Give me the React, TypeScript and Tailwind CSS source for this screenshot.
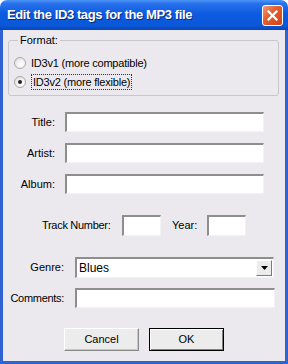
import React from "react";

const font = { fontFamily: '"Liberation Sans", Arial, sans-serif' };

function Field({ className }: { className: string }) {
  return (
    <div
      className={`h-[20px] shrink-0 bg-white border-t-2 border-l-2 border-t-[#8e8e8e] border-l-[#8e8e8e] border-b border-r border-b-[#f2f2f2] border-r-[#f2f2f2] ${className}`}
    />
  );
}

function Radio({ checked }: { checked?: boolean }) {
  return (
    <span className="w-[12px] h-[12px] rounded-full border border-[#a9a9a9] bg-[radial-gradient(circle_at_65%_65%,#ffffff_0%,#f2f2f2_45%,#d4d4d4_100%)] flex items-center justify-center shrink-0">
      {checked && <span className="w-[4px] h-[4px] rounded-full bg-[#222]" />}
    </span>
  );
}

function Button({ label, primary }: { label: string; primary?: boolean }) {
  return (
    <div
      className={`w-[75px] h-[23px] flex items-center justify-center text-[11px] text-black bg-[#ececec] ${
        primary
          ? "border border-black shadow-[inset_1px_1px_0_#ffffff,inset_-1px_-1px_0_#808080]"
          : "border border-t-[#ffffff] border-l-[#ffffff] border-b-[#8a8a8a] border-r-[#8a8a8a] shadow-[inset_-1px_-1px_0_#c8c8c8]"
      }`}
    >
      {label}
    </div>
  );
}

export default function App() {
  return (
    <div className="w-[288px] h-[364px] flex flex-col text-[11px] text-black" style={font}>
      {/* TITLE BAR */}
      <div className="h-[30px] shrink-0 rounded-t-[7px] bg-[linear-gradient(to_bottom,#4c95f8_0%,#2a72ec_12%,#0d5be0_45%,#0a57d8_85%,#0845bb_100%)] flex items-center pl-[7px] pr-[5px]">
        <span className="text-white font-bold text-[13px] tracking-[-0.4px] [text-shadow:1px_1px_0_#0a2a7a] flex-1 whitespace-nowrap">
          Edit the ID3 tags for the MP3 file
        </span>
        <div className="w-[21px] h-[21px] rounded-[3px] border border-white bg-[linear-gradient(135deg,#f39a7a_0%,#e4602f_40%,#cf4316_100%)] flex items-center justify-center">
          <svg width="11" height="11" viewBox="0 0 11 11">
            <path d="M1.5 1.5 L9.5 9.5 M9.5 1.5 L1.5 9.5" stroke="white" strokeWidth="2.2" strokeLinecap="square" />
          </svg>
        </div>
      </div>

      {/* BODY */}
      <div className="flex-1 flex flex-col bg-[#ece9ee] border-l-[3px] border-r-[3px] border-b-[3px] border-[#2f63d4]">
        {/* FORMAT GROUP */}
        <fieldset className="mt-[4px] ml-[5px] w-[271px] h-[62px] border border-[#c8c6cc] rounded-[3px] px-[5px]">
          <legend className="ml-[4px] px-[2px] leading-[13px]">Format:</legend>
          <div className="flex items-center gap-[5px] mt-[8px] h-[16px]">
            <Radio />
            <span className="tracking-[-0.2px]">ID3v1 (more compatible)</span>
          </div>
          <div className="flex items-center gap-[5px] mt-[2px] h-[17px]">
            <Radio checked />
            <span className="border border-dotted border-[#333] px-[1px] leading-[14px] tracking-[-0.2px]">ID3v2 (more flexible)</span>
          </div>
        </fieldset>

        {/* TEXT FIELDS */}
        <div className="flex items-center mt-[16px]">
          <span className="w-[52px] shrink-0 text-right">Title:</span>
          <Field className="ml-[10px] w-[199px]" />
        </div>
        <div className="flex items-center mt-[11px]">
          <span className="w-[52px] shrink-0 text-right">Artist:</span>
          <Field className="ml-[10px] w-[199px]" />
        </div>
        <div className="flex items-center mt-[11px]">
          <span className="w-[52px] shrink-0 text-right">Album:</span>
          <Field className="ml-[10px] w-[199px]" />
        </div>

        {/* TRACK / YEAR */}
        <div className="flex items-center mt-[21px] h-[21px]">
          <span className="ml-[39px] w-[69px] shrink-0 whitespace-nowrap tracking-[-0.3px]">Track Number:</span>
          <Field className="ml-[11px] w-[39px] h-[21px]" />
          <span className="ml-[11px] w-[24px] shrink-0 whitespace-nowrap">Year:</span>
          <Field className="ml-[11px] w-[39px] h-[21px]" />
        </div>

        {/* GENRE */}
        <div className="flex items-center mt-[21px]">
          <span className="w-[61px] shrink-0 text-right">Genre:</span>
          <div className="ml-[11px] w-[199px] h-[21px] shrink-0 bg-white border-t-2 border-l-2 border-t-[#8e8e8e] border-l-[#8e8e8e] border-b border-r border-b-[#f2f2f2] border-r-[#f2f2f2] flex items-center">
            <span className="flex-1 pl-[2px] text-[12px]">Blues</span>
            <div className="w-[16px] h-[16px] mr-[1px] bg-[#ececec] border border-t-white border-l-white border-b-[#7a7a7a] border-r-[#7a7a7a] flex items-center justify-center">
              <svg width="7" height="4" viewBox="0 0 7 4">
                <path d="M0 0 H7 L3.5 4 Z" fill="#000" />
              </svg>
            </div>
          </div>
        </div>

        {/* COMMENTS */}
        <div className="flex items-center mt-[10px]">
          <span className="w-[61px] shrink-0 text-right whitespace-nowrap tracking-[-0.3px]">Comments:</span>
          <Field className="ml-[11px] w-[200px]" />
        </div>

        {/* BUTTONS */}
        <div className="flex mt-[20px] ml-[61px] gap-[10px]">
          <Button label="Cancel" />
          <Button label="OK" primary />
        </div>
      </div>
    </div>
  );
}
